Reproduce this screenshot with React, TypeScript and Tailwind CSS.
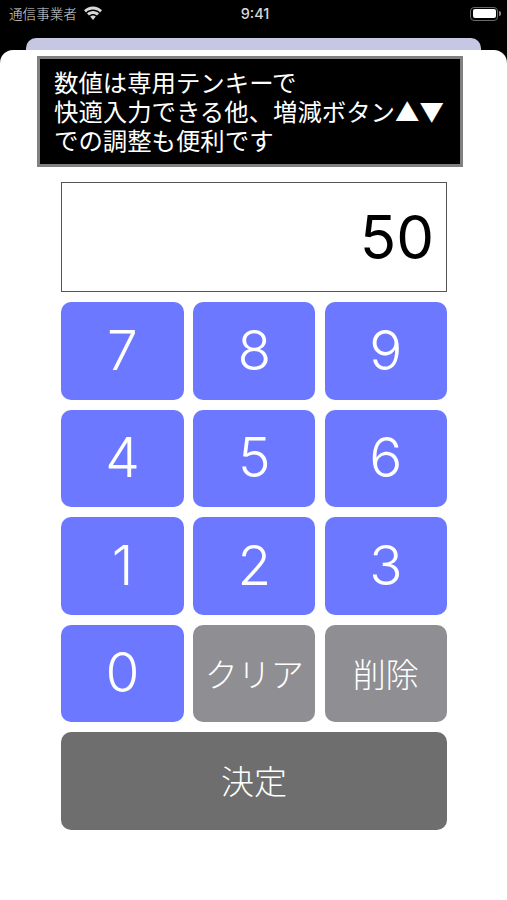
const jp = 'font-["Noto_Sans_CJK_JP",sans-serif]'
const num = 'font-["Inter","Noto_Sans_CJK_JP",sans-serif]'
const latinFirst = 'font-["Liberation_Sans","Noto_Sans_CJK_JP",sans-serif]'

function Key({ label, tone = 'blue' }: { label: string; tone?: 'blue' | 'gray' }) {
  const isText = tone === 'gray'
  return (
    <button
      className={`h-[97.6px] rounded-[10px] text-white flex items-center justify-center ${
        isText ? 'bg-[#8e8e93] text-[33px] font-light' : `bg-[#6b78ff] text-[55px] font-[350] pb-[2px] ${num}`
      }`}
    >
      {label}
    </button>
  )
}

export default function App() {
  const rows = [
    ['7', '8', '9'],
    ['4', '5', '6'],
    ['1', '2', '3'],
  ]

  return (
    <div className={`h-[900px] w-[507px] overflow-hidden bg-black flex flex-col ${jp}`}>
      <div className="h-[38px] shrink-0 flex items-center justify-between pl-[9px] pr-[6px] pb-[11px] text-[#d8d8d8]">
        <div className="flex items-center gap-[6px] w-[160px]">
          <span className="text-[13.6px] font-light pb-[1px]">通信事業者</span>
          <svg className="mt-[1px]" width="20" height="15" viewBox="0 0 20 15" fill="currentColor">
            <path d="M10 3.6c2.7 0 5.2 1 7 2.8l2-2.1C16.7 2 13.500.6 10 .6S3.300 2 1 4.300l2 2.100c1.800-1.800 4.300-2.800 7-2.800z" />
            <path d="M10 8c1.500 0 2.900.6 4 1.500l2-2.100C14.400 6 12.300 5.100 10 5.100S5.600 6 4 7.400l2 2.100c1.100-.9 2.500-1.500 4-1.500z" />
            <path d="M10 9.500c-1.100 0-2 .4-2.800 1l2.800 3.400 2.800-3.400c-.8-.6-1.700-1-2.800-1z" />
          </svg>
        </div>
        <span className={`text-[14.5px] font-medium ${num}`}>9:41</span>
        <div className="w-[160px] flex justify-end items-center">
          <div className="w-[28px] h-[14px] rounded-[4px] border-[1.5px] border-[#6a6a6a] p-[1.5px]">
            <div className="h-full w-full rounded-[2px] bg-white" />
          </div>
          <div className="w-[1.5px] h-[5px] bg-[#8a8a8a] ml-[1px] rounded-r" />
        </div>
      </div>

      <div className="h-[12px] shrink-0 mx-[26px] rounded-t-[10px] bg-[#c5c7e3]" />

      <div className="flex-1 rounded-t-[13px] bg-white flex flex-col pt-[6px] pl-[37px]">
        <div className={`w-[426px] h-[111px] border-[3px] border-[#808080] bg-black text-white text-[24.4px] leading-[29px] pl-[14px] pt-[10px] whitespace-nowrap ${latinFirst}`}>
          <div>数値は専用テンキーで</div>
          <div>
            快適入力できる他、増減ボタン<span className={`leading-none ${jp}`}>▲▼</span>
          </div>
          <div>での調整も便利です</div>
        </div>

        <div className="ml-[24px]">
          <div className={`mt-[15px] w-[386px] h-[110px] border-[1.5px] border-[#555] flex items-center justify-end pr-[12px] text-[60px] font-normal text-black ${num}`}>
            50
          </div>

          <div className="mt-[10px] w-[386px] grid grid-cols-[123px_122px_122.4px] gap-x-[9.3px] gap-y-[10px]">
            {rows.flat().map((n) => (
              <Key key={n} label={n} />
            ))}
            <Key label="0" />
            <Key label="クリア" tone="gray" />
            <Key label="削除" tone="gray" />
            <button className="col-span-3 h-[97.6px] rounded-[10px] bg-[#6e6e6e] text-white text-[33px] font-light flex items-center justify-center">
              決定
            </button>
          </div>
        </div>
      </div>
    </div>
  )
}
